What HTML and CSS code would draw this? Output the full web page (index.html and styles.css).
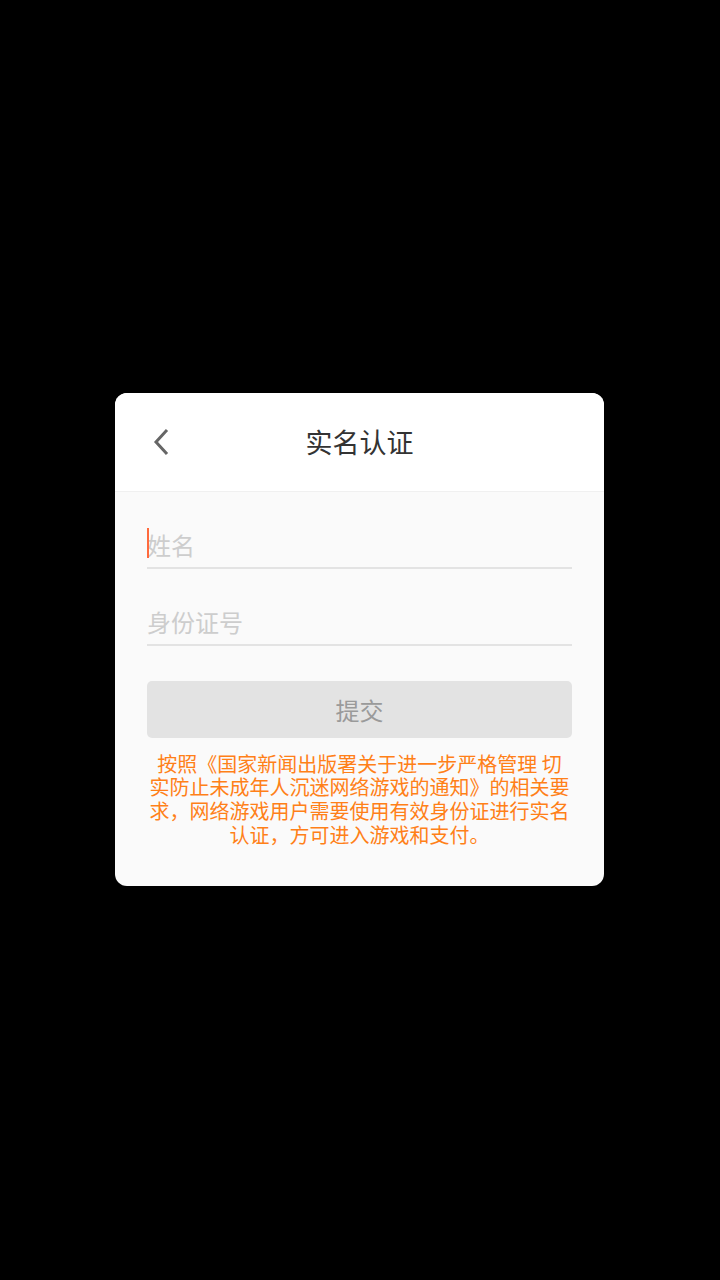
FILE: index.html
```html
<!DOCTYPE html>
<html lang="zh-CN">
<head>
<meta charset="utf-8">
<title>实名认证</title>
<link rel="stylesheet" href="styles.css">
</head>
<body>
<div class="dialog">
  <div class="header">
    <button class="back" aria-label="返回">
      <svg width="20" height="28" viewBox="0 0 20 28"><path d="M14 3 L4 14 L14 25" fill="none" stroke="#666" stroke-width="3" stroke-linecap="square" stroke-linejoin="miter"/></svg>
    </button>
    <h1 class="title">实名认证</h1>
  </div>
  <div class="body">
    <div class="field">
      <span class="caret"></span>
      <input class="input" type="text" placeholder="姓名">
    </div>
    <div class="field">
      <input class="input" type="text" placeholder="身份证号">
    </div>
    <button class="submit">提交</button>
    <p class="notice">按照《国家新闻出版署关于进一步严格管理 切实防止未成年人沉迷网络游戏的通知》的相关要求，网络游戏用户需要使用有效身份证进行实名认证，方可进入游戏和支付。</p>
  </div>
</div>
</body>
</html>
```

FILE: styles.css
```css
* { box-sizing: border-box; }
html, body { margin: 0; padding: 0; }
body {
  background: #000;
  min-height: 100vh;
  padding: 0 1px 1px 0;
  display: flex;
  align-items: center;
  justify-content: center;
  font-family: "Noto Sans CJK SC", "Noto Sans", sans-serif;
}
.dialog {
  width: 489px;
  border-radius: 12px;
  overflow: hidden;
  background: #fafafa;
}
.header {
  position: relative;
  height: 99px;
  background: #fff;
  border-bottom: 1px solid #f0f0f0;
  display: flex;
  align-items: center;
  justify-content: center;
}
.back {
  position: absolute;
  left: 37px;
  top: 35px;
  width: 20px;
  height: 28px;
  padding: 0;
  border: 0;
  background: none;
  display: block;
}
.back svg { display: block; }
.title {
  margin: 0;
  font-size: 27px;
  font-weight: 400;
  color: #333;
  line-height: 1;
}
.body {
  padding: 30px 32px 40px;
  display: flex;
  flex-direction: column;
}
.field {
  position: relative;
  height: 47px;
  border-bottom: 2px solid #e3e3e3;
}
.field + .field { margin-top: 30px; }
.input {
  width: 100%;
  height: 45px;
  border: 0;
  outline: none;
  background: transparent;
  padding: 0;
  font-family: "Noto Sans CJK SC", "Noto Sans", sans-serif;
  font-size: 24px;
  color: #333;
}
.input::placeholder { color: #cdcdcd; }
.caret {
  position: absolute;
  left: 0;
  top: 6px;
  width: 2px;
  height: 30px;
  background: #ff6a3d;
}
.submit {
  margin-top: 35px;
  height: 57px;
  border: 0;
  border-radius: 5px;
  background: #e3e3e3;
  color: #9a9a9a;
  font-family: "Noto Sans CJK SC", "Noto Sans", sans-serif;
  font-size: 24px;
  padding: 0;
}
.notice {
  margin: 14px auto 0;
  width: 422px;
  text-align: center;
  color: #ff8018;
  font-size: 20px;
  line-height: 23.6px;
}
```
